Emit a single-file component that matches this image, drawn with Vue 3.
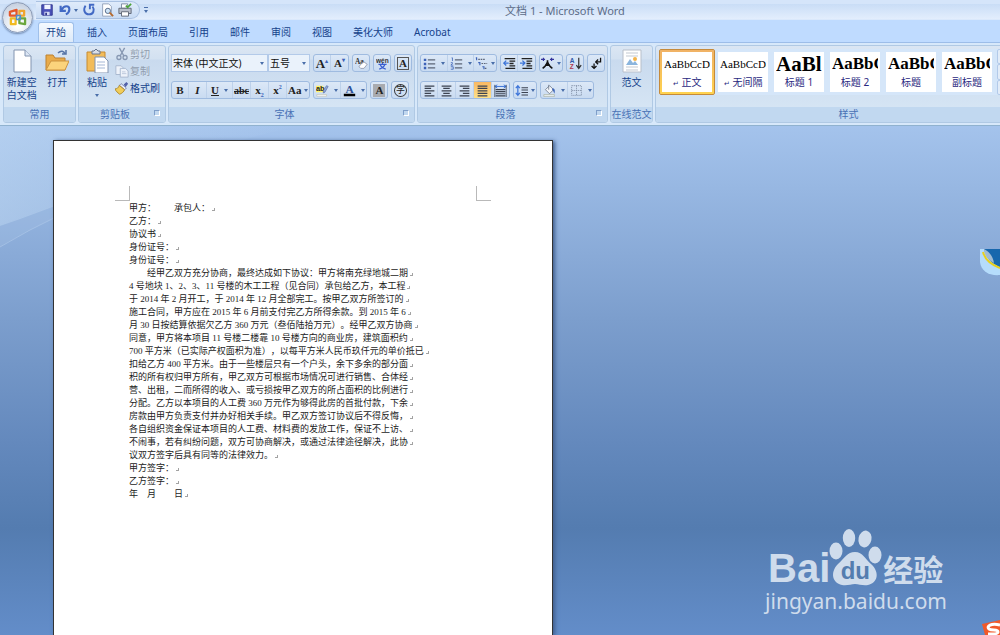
<script setup>
/**
 * App.vue
 * Word 2007 window: ribbon, page and desktop widgets
 */
import { ref } from 'vue'

const activeTab = ref('开始')
const activeStyle = ref(0)
const align = ref('justify')

const tabs = ['开始', '插入', '页面布局', '引用', '邮件', '审阅', '视图', '美化大师', 'Acrobat']

// 16x16 icons
const icons = {
  save: '<path d="M2 2h12v12H3l-1-1z" fill="#4a50b8" stroke="#30368e"/><path d="M5 2h7v5H5z" fill="#f1f4ff"/><path d="M5 10h6v4H5z" fill="#d4daf4"/><path d="M6 11h2v3H6z" fill="#30368e"/>',
  undo: '<path d="M3 3v6h6M4 8c3-6 9-5 9-1 0 3-2 5-4 6" fill="none" stroke="#4269c4" stroke-width="2.4"/>',
  redo: '<path d="M4 3c-3 5-1 10 4 10s7-5 4-9M14 2H9v5" fill="none" stroke="#4269c4" stroke-width="2.2"/>',
  preview: '<path d="M3 1h7l3 3v11H3z" fill="#fff" stroke="#8d9cb5"/><circle cx="9" cy="9" r="3" fill="#cfe5f8" stroke="#4d6181"/><path d="M11 11l4 4" stroke="#b5692c" stroke-width="2"/>',
  print: '<path d="M4 1h7v5H4z" fill="#fff" stroke="#75839a"/><path d="M1 6h14v6H1z" fill="#b9bfcb" stroke="#59616f"/><path d="M4 10h8v5H4z" fill="#fff" stroke="#59616f"/><path d="M9 3l2 2 4-4" fill="none" stroke="#4da43a" stroke-width="2"/>',
  cut: '<path d="M5 1l5 9M11 1L6 10" stroke="#8798b3" stroke-width="1.6"/><circle cx="4.500" cy="12" r="2.300" fill="none" stroke="#8798b3" stroke-width="1.500"/><circle cx="11.500" cy="12" r="2.300" fill="none" stroke="#8798b3" stroke-width="1.500"/>',
  copy: '<path d="M1 2h6l2 2v8H1z" fill="#edf2fa" stroke="#a3b3cc"/><path d="M6 5h6l3 3v7H6z" fill="#edf2fa" stroke="#a3b3cc"/><path d="M8 9h4M8 11h5" stroke="#b8c5d9"/>',
  brush: '<path d="M10 4l3-3 2 2-3 4z" fill="#5361a8"/><path d="M7 3l6 5-2 2-6-5z" fill="#e9eefc" stroke="#7883ad"/><path d="M5 5l6 5c-2 4-5 5-6 5-2-2-4-3-5-6 2 0 4-1 5-4z" fill="#f1cd5a" stroke="#a98427"/>',
  clear: '<text x="0" y="8" font-size="9" font-weight="bold" font-family="Liberation Serif" fill="#333">Aa</text><path d="M7 9l4-3 4 3-4 5H7l-2-2z" fill="#fff" stroke="#8b93a8"/>',
  phonetic: '<text x="0" y="7" font-size="8" font-weight="bold" font-family="Liberation Sans" fill="#333">wén</text><path d="M3 9h10M8 7v2M5 9c1 3 4 5 7 6M11 9c-1 3-4 5-7 6" fill="none" stroke="#3a5fd0" stroke-width="1.500"/>',
  highlight: '<path d="M0 2h9v8H0z" fill="#fff36b"/><text x="0" y="9" font-size="9" font-weight="bold" font-family="Liberation Sans" fill="#222">ab</text><path d="M13 2l2 1-4 7-2 1v-3z" fill="#8fa6d6" stroke="#4a639e" stroke-width=".7"/><path d="M1 13h12v2H1z" fill="#fff" stroke="#b2b29a" stroke-width=".6"/>',
  color: '<text x="3" y="11" font-size="14" font-weight="bold" font-family="Liberation Serif" fill="#2c4f96">A</text><path d="M1 12h14v3H1z" fill="#000"/>',
  bullets: '<path d="M1 2h3v3H1zM1 7h3v3H1zM1 12h3v3H1z" fill="#3c62b8"/><path d="M6 3.500h9M6 8.500h9M6 13.500h9" stroke="#5c6577" stroke-width="1.500"/>',
  numbers: '<path d="M2 1h1v4M1 7h2v1l-2 2h3M1 12h3v3H1" fill="none" stroke="#3c62b8"/><path d="M6 3.500h9M6 8.500h9M6 13.500h9" stroke="#5c6577" stroke-width="1.500"/>',
  levels: '<path d="M1 1h1v3M4 7h2v3M9 12h2v3" fill="none" stroke="#3c62b8" stroke-width="1.400"/><path d="M4 3h9M8 8h7M12 14h3" stroke="#5c6577" stroke-width="1.400" stroke-dasharray="2 1"/>',
  outdent: '<path d="M2 2h13M8 5h7M8 8h5M8 11h7M3 14h12" stroke="#222" stroke-width="1.600"/><path d="M7 7.500H1M4 4.500l-3 3 3 3" fill="none" stroke="#3c74d8" stroke-width="1.600"/>',
  indent: '<path d="M2 2h13M8 5h7M8 8h5M8 11h7M3 14h12" stroke="#222" stroke-width="1.600"/><path d="M0 7.500h6M3 4.500l3 3-3 3" fill="none" stroke="#3c74d8" stroke-width="1.600"/>',
  asian: '<path d="M8 4v2c-1 4-3 6-6 8M8 6c1 4 3 6 6 8M5 10h6" fill="none" stroke="#111" stroke-width="2"/><path d="M0 3h5M11 3h5M3 1v4M13 1v4" stroke="#34349c" stroke-width="1.500"/>',
  sort: '<text x="1" y="7" font-size="8" font-weight="bold" font-family="Liberation Sans" fill="#3157a8">A</text><text x="1" y="15" font-size="8" font-weight="bold" font-family="Liberation Sans" fill="#b0364e">Z</text><path d="M12 1v13M9 10l3 4 3-4" fill="none" stroke="#333" stroke-width="1.500"/>',
  marks: '<path d="M13 1v5H8M10 3L7 6l3 3" fill="none" stroke="#111" stroke-width="1.600"/><path d="M5 8v6M2 11l3 3 3-3" fill="none" stroke="#111" stroke-width="1.600"/>',
  left: '<path d="M2 2.500h12M2 5.500h8M2 8.500h12M2 11.500h8M2 14.500h12" stroke="#3b4250" stroke-width="1.500"/>',
  center: '<path d="M2 2.500h12M4 5.500h8M2 8.500h12M4 11.500h8M2 14.500h12" stroke="#3b4250" stroke-width="1.500"/>',
  right: '<path d="M2 2.500h12M6 5.500h8M2 8.500h12M6 11.500h8M2 14.500h12" stroke="#3b4250" stroke-width="1.500"/>',
  justify: '<path d="M2 2.500h12M2 5.500h12M2 8.500h12M2 11.500h12M2 14.500h12" stroke="#3b4250" stroke-width="1.500"/>',
  spread: '<path d="M1 3h14M4 1L1 3l3 2M12 1l3 2-3 2" fill="none" stroke="#3c74d8" stroke-width="1.200"/><path d="M2 7h12M2 9.500h12M2 12h12M2 14.500h12" stroke="#3b4250" stroke-width="1.500"/><path d="M1 1v15M15 1v15" stroke="#3b4250"/>',
  spacing: '<path d="M3.500 2v12M1 5l2.500-3L6 5M1 11l2.500 3L6 11" fill="none" stroke="#3c74d8" stroke-width="1.500"/><path d="M8 4.500h8M8 7.500h8M8 10.500h8M8 13.500h8" stroke="#3b4250" stroke-width="1.300"/>',
  fill: '<path d="M3 7l5-5 5 5-5 5z" fill="#f4f6fa" stroke="#6d7789"/><path d="M7 1v6" stroke="#6d7789"/><path d="M12 5c3 1 3 4 2 7-1-2-1-4-3-5z" fill="#4269b8"/><path d="M1 13h13v2.500H1z" fill="#e8eef0" stroke="#a2a995" stroke-width=".7"/>',
  border: '<path d="M2 2h12v12H2zM8 2v12M2 8h12" fill="none" stroke="#7d8ba3" stroke-dasharray="1.500 1"/>',
}

const quickBar = [
  { icon: 'save', name: '保存' },
  { icon: 'undo', name: '撤消', caret: true },
  { icon: 'redo', name: '恢复' },
  { icon: 'preview', name: '打印预览' },
  { icon: 'print', name: '快速打印' },
]

const fontTop = [
  [{ text: 'A', mark: '▴', cls: 'grow', name: '增大字体' }, { text: 'A', mark: '▾', cls: 'shrink', name: '缩小字体' }],
  [{ icon: 'clear', name: '清除格式' }],
  [{ icon: 'phonetic', name: '拼音指南' }],
  [{ text: 'A', cls: 'boxed', name: '字符边框' }],
]

const fontBottom = [
  [
    { text: 'B', cls: 'bold', name: '加粗' },
    { text: 'I', cls: 'italic', name: '倾斜' },
    { text: 'U', cls: 'underline', name: '下划线', caret: true, wide: true },
    { text: 'abc', cls: 'strike', name: '删除线' },
    { text: 'x', sub: '2', cls: 'bold', name: '下标' },
    { text: 'x', sup: '2', cls: 'bold', name: '上标' },
    { text: 'Aa', cls: 'case', name: '更改大小写', caret: true },
  ],
  [
    { icon: 'highlight', name: '突出显示', caret: true, wide: true },
    { icon: 'color', name: '字体颜色', caret: true, wide: true },
  ],
  [{ text: 'A', cls: 'shaded', name: '字符底纹' }],
  [{ text: '字', cls: 'circled', name: '带圈字符' }],
]

const paraTop = [
  [
    { icon: 'bullets', name: '项目符号', caret: true, wide: true },
    { icon: 'numbers', name: '编号', caret: true, wide: true },
    { icon: 'levels', name: '多级列表', caret: true },
  ],
  [{ icon: 'outdent', name: '减少缩进量' }, { icon: 'indent', name: '增加缩进量' }],
  [{ icon: 'asian', name: '中文版式', caret: true }],
  [{ icon: 'sort', name: '排序' }],
  [{ icon: 'marks', name: '显示编辑标记' }],
]

const paraBottom = [
  [
    { icon: 'left', name: '文本左对齐' },
    { icon: 'center', name: '居中' },
    { icon: 'right', name: '文本右对齐' },
    { icon: 'justify', name: '两端对齐' },
    { icon: 'spread', name: '分散对齐' },
  ],
  [{ icon: 'spacing', name: '行距', caret: true }],
  [
    { icon: 'fill', name: '底纹', caret: true, wide: true },
    { icon: 'border', name: '边框', caret: true, wide: true },
  ],
]

const fontRows = [fontTop, fontBottom]
const paraRows = [paraTop, paraBottom]

const styles = [
  { sample: 'AaBbCcDc', name: '正文', mark: true, size: 'small' },
  { sample: 'AaBbCcDc', name: '无间隔', mark: true, size: 'small' },
  { sample: 'AaBl', name: '标题 1', size: 'large' },
  { sample: 'AaBbC', name: '标题 2', size: 'medium' },
  { sample: 'AaBbC', name: '标题', size: 'medium' },
  { sample: 'AaBbC', name: '副标题', size: 'medium' },
]

const lines = [
  '甲方：　　承包人：',
  '乙方：',
  '协议书',
  '身份证号：',
  '身份证号：',
  '　　经甲乙双方充分协商，最终达成如下协议：甲方将南充绿地城二期',
  '4 号地块 1、2、3、11 号楼的木工工程（见合同）承包给乙方，本工程',
  '于 2014 年 2 月开工，于 2014 年 12 月全部完工。按甲乙双方所签订的',
  '施工合同，甲方应在 2015 年 6 月前支付完乙方所得余款。到 2015 年 6',
  '月 30 日按结算依据欠乙方 360 万元（叁佰陆拾万元）。经甲乙双方协商',
  '同意，甲方将本项目 11 号楼二楼靠 10 号楼方向的商业房，建筑面积约',
  '700 平方米（已实际产权面积为准），以每平方米人民币玖仟元的单价抵已',
  '扣给乙方 400 平方米。由于一些楼层只有一个户头，余下多余的部分面',
  '积的所有权归甲方所有，甲乙双方可根据市场情况可进行销售、合体经',
  '营、出租，二而所得的收入、或亏损按甲乙双方的所占面积的比例进行',
  '分配。乙方以本项目的人工费 360 万元作为够得此房的首批付款，下余',
  '房款由甲方负责支付并办好相关手续。甲乙双方签订协议后不得反悔，',
  '各自组织资金保证本项目的人工费、材料费的发放工作，保证不上访、',
  '不闹事，若有纠纷问题，双方可协商解决，或通过法律途径解决，此协',
  '议双方签字后具有同等的法律效力。',
  '甲方签字：',
  '乙方签字：',
  '年　月　　日',
]
</script>

<template>
  <div class="word">
    <!-- title bar -->
    <header class="title-bar">
      <div class="quick">
        <button v-for="q in quickBar" :key="q.icon" class="quick-btn" :aria-label="q.name">
          <svg class="ico" viewBox="0 0 16 16" v-html="icons[q.icon]"></svg>
          <i v-if="q.caret" class="caret"></i>
        </button>
      </div>
      <button class="more" aria-label="自定义快速访问工具栏"><i class="caret"></i></button>
      <h1 class="title">文档 1 - Microsoft Word</h1>
    </header>

    <button class="orb" aria-label="Office 按钮">
      <svg viewBox="0 0 20 20">
        <g fill="none" stroke-width="2.400" stroke-linejoin="round">
          <path d="M9 8H2V4l7-2z" stroke="#e4572a" />
          <path d="M12 3h5v5h-5z" stroke="#f0a52f" />
          <path d="M3 11h5v6H3z" stroke="#f1ba22" />
          <path d="M12 11h6v6l-6-1z" stroke="#6aa63c" />
          <path d="M9 8h4v4H9z" stroke="#4b8fd2" stroke-width="1.600" />
        </g>
      </svg>
    </button>

    <nav class="tabs">
      <button v-for="t in tabs" :key="t" class="tab" :class="{ active: t === activeTab }" @click="activeTab = t">{{ t }}</button>
    </nav>

    <!-- ribbon -->
    <div class="ribbon">
      <section class="group common">
        <div class="body">
          <button class="big">
            <svg viewBox="0 0 24 24">
              <path d="M4 1h11l6 6v16H4z" fill="#fff" stroke="#8294b0" />
              <path d="M15 1v6h6" fill="#dce6f4" stroke="#8294b0" />
            </svg>
            <span>新建空<br>白文档</span>
          </button>
          <button class="big">
            <svg viewBox="0 0 24 24">
              <path d="M1 21V6h7l2 3h10v12z" fill="#e8aa49" stroke="#bd8130" />
              <path d="M1 21l5-9h18l-4 9z" fill="#fbd37c" stroke="#cc9340" />
              <path d="M13 4c3-3 6-2 7 1M21 1v4h-4" fill="none" stroke="#5674a6" stroke-width="1.500" />
            </svg>
            <span>打开</span>
          </button>
        </div>
        <h2>常用</h2>
      </section>

      <section class="group clipboard">
        <div class="body">
          <button class="big">
            <svg viewBox="0 0 24 24">
              <path d="M2 3h18v19H2z" fill="#f2bc5a" stroke="#c68a31" />
              <path d="M7 5V2h2l2-2 2 2h2v3z" fill="#d9dfe9" stroke="#67758c" />
              <path d="M10 8h9l4 4v12H10z" fill="#fff" stroke="#8294b0" />
              <path d="M12 13h8M12 16h8M12 19h8" stroke="#a4b7d6" />
            </svg>
            <span>粘贴</span>
            <i class="caret"></i>
          </button>
          <div class="stack">
            <button class="line-btn off" disabled><svg class="ico" viewBox="0 0 16 16" v-html="icons.cut"></svg>剪切</button>
            <button class="line-btn off" disabled><svg class="ico" viewBox="0 0 16 16" v-html="icons.copy"></svg>复制</button>
            <button class="line-btn"><svg class="ico" viewBox="0 0 16 16" v-html="icons.brush"></svg>格式刷</button>
          </div>
        </div>
        <h2 class="with-launcher">剪贴板<i class="launcher"></i></h2>
      </section>

      <section class="group font">
        <div class="body rows">
          <div v-for="(row, r) in fontRows" :key="r" class="row">
            <div v-if="r === 0" class="combos">
              <label class="combo family">
                <select aria-label="字体"><option>宋体 (中文正文)</option></select>
                <i class="caret"></i>
              </label>
              <label class="combo size">
                <select aria-label="字号"><option>五号</option></select>
                <i class="caret"></i>
              </label>
            </div>
            <div v-for="(set, s) in row" :key="s" class="set">
              <button v-for="b in set" :key="b.name" class="tool" :class="{ wide: b.wide }" :aria-label="b.name">
                <svg v-if="b.icon" class="ico" viewBox="0 0 16 16" v-html="icons[b.icon]"></svg>
                <span v-else class="glyph" :class="b.cls">{{ b.text }}<sub v-if="b.sub">{{ b.sub }}</sub><sup v-if="b.sup">{{ b.sup }}</sup><sup v-if="b.mark">{{ b.mark }}</sup></span>
                <i v-if="b.caret" class="caret"></i>
              </button>
            </div>
          </div>
        </div>
        <h2 class="with-launcher">字体<i class="launcher"></i></h2>
      </section>

      <section class="group paragraph">
        <div class="body rows">
          <div v-for="(row, r) in paraRows" :key="r" class="row">
            <div v-for="(set, s) in row" :key="s" class="set">
              <button
                v-for="b in set" :key="b.name" class="tool" :class="{ active: b.icon === align, wide: b.wide }"
                :aria-label="b.name"
              >
                <svg class="ico" viewBox="0 0 16 16" v-html="icons[b.icon]"></svg>
                <i v-if="b.caret" class="caret"></i>
              </button>
            </div>
          </div>
        </div>
        <h2 class="with-launcher">段落<i class="launcher"></i></h2>
      </section>

      <section class="group online">
        <div class="body">
          <button class="big">
            <svg viewBox="0 0 24 24">
              <path d="M3 1h18v22H3z" fill="#fff" stroke="#b8bfca" />
              <path d="M6 4h12M6 7h12M6 18h12M6 21h12" stroke="#c3c9d1" />
              <path d="M6 16l4-6 3 4 2-2 3 4z" fill="#8bb5dd" />
              <circle cx="15" cy="10" r="2" fill="#f3b44b" />
            </svg>
            <span>范文</span>
          </button>
        </div>
        <h2>在线范文</h2>
      </section>

      <!-- runs on past the right edge of the window -->
      <section class="group styles">
        <div class="body">
          <div class="gallery">
            <button
              v-for="(s, i) in styles" :key="s.name" class="style" :class="{ active: i === activeStyle }"
              @click="activeStyle = i"
            >
              <span class="sample" :class="s.size">{{ s.sample }}</span>
              <span class="style-name"><small v-if="s.mark">↵</small>{{ s.name }}</span>
            </button>
            <div class="scroller"><i></i><i></i><i></i></div>
          </div>
        </div>
        <h2>样式</h2>
      </section>
    </div>

    <!-- page -->
    <main class="workspace">
      <svg class="swoosh" viewBox="0 0 300 140">
        <defs>
          <linearGradient id="fade">
            <stop offset="0" stop-color="#c3dbf4" stop-opacity=".5" />
            <stop offset="1" stop-color="#c3dbf4" stop-opacity="0" />
          </linearGradient>
        </defs>
        <path d="M0 0h300C200 20 120 58 0 100z" fill="url(#fade)" />
        <path d="M0 100L60 77v12Q30 103 0 121z" fill="#b4cdec" opacity=".2" />
        <path d="M0 121Q30 103 60 89" fill="none" stroke="#b8d0ee" opacity=".5" />
      </svg>
      <article class="sheet">
        <div class="corners"><i class="corner start"></i><i class="corner end"></i></div>
        <p v-for="(l, i) in lines" :key="i">{{ l }}<i class="break"></i></p>
      </article>
    </main>

    <!-- watermark -->
    <div class="watermark">
      <div class="brand">
        <span class="bai">Bai</span>
        <span class="paw">
          <svg viewBox="0 0 50 58">
            <g fill="#cfdcec">
              <ellipse cx="6" cy="23" rx="6.500" ry="8.500" />
              <ellipse cx="19" cy="10" rx="6.200" ry="9" />
              <ellipse cx="35" cy="11" rx="6.500" ry="8.500" transform="rotate(12 35 11)" />
              <ellipse cx="45" cy="27" rx="6.500" ry="8.500" />
              <path d="M25 24c8 0 10 7 16 12 9 8 7 19-3 21-5 1-9-1-13-1s-8 2-13 1C2 55 0 44 8 36c7-6 9-12 17-12z" />
            </g>
          </svg>
          <b>du</b>
        </span>
        <span class="jingyan">经验</span>
      </div>
      <div class="site">jingyan.baidu.com</div>
    </div>

    <!-- desktop widgets -->
    <svg class="widget bird" viewBox="0 0 20 27">
      <path d="M0 0h20v26C9 27 1 22 0 13z" fill="#b5dcfb" />
      <path d="M4 0h16v18C12 15 6 9 4 0z" fill="#1767ad" />
      <path d="M4 0c6 3 9 8 10 14C8 11 4 6 4 0z" fill="#9fbad3" />
      <path d="M3 3c2 8 9 13 17 16" fill="none" stroke="#e8cf1c" stroke-width="2" />
    </svg>
    <svg class="widget ime" viewBox="0 0 19 15">
      <path d="M1 4l18-4v15H4z" fill="#f1592a" />
      <path d="M19 5C10 3 5 6 8 9c3 2 9 0 9 3 0 2-5 2-10 2" fill="none" stroke="#fff" stroke-width="3" />
    </svg>
  </div>
</template>

<style>
body { margin: 0; }
</style>

<style scoped>
.word {
  position: relative;
  display: flex;
  flex-direction: column;
  min-height: 100vh;
  overflow: hidden;
  background: #bfdbff;
  color: #15428b;
  font-family: "Noto Sans", "Noto Sans CJK SC", sans-serif;
  font-size: 10px;
  line-height: 13px;
}

button {
  padding: 0;
  border: 0;
  background: none;
  color: inherit;
  font: inherit;
}

h1, h2, p { margin: 0; font-weight: normal; }

.ico { display: block; width: 14px; height: 14px; flex: none; }
.tool .ico { width: 13px; height: 13px; }

.caret {
  flex: none;
  width: 0;
  height: 0;
  border: 2px solid transparent;
  border-top: 3px solid #4a6ea9;
  border-bottom: 0;
}

/* title bar */
.title-bar {
  display: flex;
  align-items: center;
  height: 20px;
  padding-left: 36px;
  background: linear-gradient(#d5e5fa 0, #d5e5fa 4px, #c9ddf6 4px, #e3eefd 19px, #d3e4fa 20px);
}

.quick {
  display: flex;
  align-items: center;
  gap: 4px;
  height: 18px;
  padding: 0 7px 0 4px;
  border: 1px solid #a9c1e2;
  border-left: 0;
  border-radius: 0 10px 10px 0;
  background: linear-gradient(#dfebfb, #c8dbf4);
  box-sizing: border-box;
}

.quick-btn { display: flex; align-items: center; gap: 2px; }
.more { margin-left: 4px; padding-top: 2px; border-top: 1px solid #4a6ea9; }
.more .caret { display: block; }

.title {
  flex: 1;
  padding-right: 18px;
  color: #5c6c88;
  font-size: 11px;
  text-align: center;
}

.orb {
  position: absolute;
  top: 2px;
  left: 2px;
  width: 31px;
  height: 31px;
  border: 1px solid #8d9cb6;
  border-radius: 50%;
  background: radial-gradient(circle at 50% 75%, #fff 10%, #dfe6f0 50%, #b7c3d6);
  box-shadow: 0 1px 2px #6f88ae;
}

.orb svg { display: block; width: 19px; margin: auto; }

/* tabs */
.tabs {
  display: flex;
  align-items: flex-end;
  gap: 5px;
  height: 22px;
  padding-left: 38px;
}

.tab {
  height: 20px;
  padding: 0 7px;
  border: 1px solid transparent;
  border-bottom: 0;
  box-sizing: border-box;
  white-space: nowrap;
}

.tab.active {
  border-color: #a0c0ea;
  border-radius: 3px 3px 0 0;
  background: linear-gradient(#f4f9ff, #dce9f8);
}

/* ribbon */
.ribbon {
  display: flex;
  gap: 2px;
  height: 84px;
  padding: 2px 0 2px 3px;
  border-top: 1px solid #9dbde8;
  border-bottom: 1px solid #90b2cf;
  background: #d7e8fa;
  box-sizing: border-box;
}

.group {
  display: flex;
  flex: none;
  flex-direction: column;
  border: 1px solid #b0c9e4;
  border-radius: 3px;
  background: linear-gradient(#dbe6f3 0, #d3e1f1 13px, #c9daee 14px, #d9e8f6);
  box-sizing: border-box;
  overflow: hidden;
}

.common { width: 73px; }
.clipboard { width: 88px; }
.font { width: 247px; }
.paragraph { width: 191px; }
.online { width: 43px; }
.styles { flex: 1; min-width: 0; margin-right: -42px; }

.body { display: flex; flex: 1; }

.group h2 {
  position: relative;
  height: 15px;
  background: #c1d8f0;
  color: #4871b5;
  font-size: 10px;
  line-height: 15px;
  text-align: center;
  white-space: nowrap;
}

.group .with-launcher { padding-right: 14px; }

.launcher {
  position: absolute;
  top: 3px;
  right: 5px;
  width: 4px;
  height: 4px;
  border: 1px solid #7f9fca;
  border-right-color: #fff;
  border-bottom-color: #fff;
}

.big {
  display: flex;
  flex: 1;
  flex-direction: column;
  align-items: center;
  gap: 3px;
  padding-top: 3px;
}

.big svg { width: 24px; height: 24px; }
.big .caret { margin-top: 2px; }

.stack { display: flex; flex-direction: column; gap: 3px; padding: 1px 5px 0 0; }
.line-btn { display: flex; align-items: center; gap: 1px; white-space: nowrap; }
.off { color: #929eae; }

.rows { flex-direction: column; gap: 9px; padding: 8px 2px 0; }
.row { display: flex; gap: 3px; }
.combos { display: flex; }

.combo {
  display: flex;
  align-items: center;
  height: 18px;
  padding-right: 3px;
  border: 1px solid #b3cae9;
  background: #eaf2fb;
  box-sizing: border-box;
}

.combo select {
  flex: 1;
  min-width: 0;
  padding: 0 0 0 1px;
  border: 0;
  background: none;
  color: #111;
  font: inherit;
  appearance: none;
}

.family { width: 97px; }
.size { width: 42px; }

.set {
  display: flex;
  height: 18px;
  border: 1px solid #9fbbe0;
  border-radius: 3px;
  background: linear-gradient(#dce8f7, #c9dbf1);
  box-sizing: border-box;
}

.tool {
  display: flex;
  flex: none;
  align-items: center;
  justify-content: center;
  gap: 3px;
  min-width: 16px;
  padding: 0 1px;
  box-sizing: border-box;
}

.wide { gap: 5px; min-width: 26px; }
.tool + .tool { min-width: 18px; border-left: 1px solid #bdd1ea; }
.tool + .wide { min-width: 26px; }
.tool.active { background: linear-gradient(#f9b862, #fde08a); }

.glyph {
  color: #222;
  font-family: "Liberation Serif", "Noto Sans CJK SC", serif;
  font-size: 11px;
  font-weight: bold;
}

.glyph sub, .glyph sup { color: #3c62b8; font-size: 6px; line-height: 0; }
.grow { font-size: 13px; }
.italic { font-style: italic; }
.underline { text-decoration: underline; }
.strike { font-size: 10px; text-decoration: line-through; }
.boxed { padding: 0 1px; border: 1px solid #555; line-height: 11px; }
.shaded { padding: 0 2px; background: #a9abb0; }

.circled {
  padding: 0 1px;
  border: 1px solid #333;
  border-radius: 50%;
  font-size: 9px;
  font-weight: normal;
  line-height: 11px;
}

/* style gallery */
.gallery {
  display: flex;
  flex: 1;
  height: 46px;
  margin: 3px 3px 0;
  background: #d5e6f9;
}

.style {
  display: flex;
  flex: none;
  flex-direction: column;
  width: 56px;
  padding: 2px;
  border: 1px solid transparent;
  background: #fff content-box;
  box-sizing: border-box;
}

.style.active {
  border-color: #c58a3b;
  border-radius: 2px;
  background: linear-gradient(#fff, #fff) content-box, linear-gradient(#f0b266, #ffd34f) padding-box;
}

.sample {
  flex: none;
  height: 24px;
  margin: 0 2px;
  overflow: hidden;
  color: #000;
  font-family: "Liberation Serif", serif;
  line-height: 24px;
  text-align: left;
}

.small { font-size: 11px; }
.medium { font-size: 17px; font-weight: bold; }
.large { font-size: 21px; font-weight: bold; }
.style-name { color: #28287e; text-align: center; white-space: nowrap; }
.style-name small { margin-right: 3px; font-size: 7px; }

.scroller { display: flex; flex-direction: column; width: 16px; margin-left: 2px; }
.scroller i { flex: 1; border: 1px solid #b3cae9; border-radius: 2px; background: #e2ecf8; }

/* page */
.workspace {
  position: relative;
  display: flex;
  flex: 1;
  padding: 14px 0 0 53px;
  background: linear-gradient(#a4c3ec 0, #7c9ecd 38%, #6489bd 62%, #547cb0 79%, #638dc9);
}

.swoosh { position: absolute; top: 0; left: 0; width: 300px; height: 140px; }

.sheet {
  position: relative;
  width: 500px;
  padding: 45px 61px 60px 75px;
  border: 1px solid #333;
  border-bottom: 0;
  background: #fff;
  box-shadow: 2px 1px 4px #3f5d8c;
  box-sizing: border-box;
  color: #1b1b1b;
  font-family: "Liberation Serif", "Noto Sans CJK SC", serif;
  font-size: 9px;
  line-height: 13px;
  text-spacing-trim: space-all;
}

.sheet p { white-space: nowrap; }
.corners { display: flex; justify-content: space-between; height: 16px; margin-left: -14px; }
.corner { width: 14px; height: 14px; border: 0 solid #b9b9b9; border-bottom-width: 1px; }
.start { border-right-width: 1px; }
.end { border-left-width: 1px; }

.break {
  display: inline-block;
  width: 2px;
  height: 2px;
  margin-left: 2px;
  border: 0 solid #a3a3a3;
  border-width: 0 1px 1px 0;
}

/* watermark */
.watermark {
  position: absolute;
  right: 53px;
  bottom: 19px;
  color: #cfdcec;
}

.brand { display: flex; align-items: flex-end; height: 58px; padding: 0 2px 0 3px; }
.bai { font: bold 40px/36px "Liberation Sans", sans-serif; }
.paw { position: relative; width: 53px; height: 58px; }
.paw svg { display: block; width: 50px; height: 58px; overflow: visible; }

.paw b {
  position: absolute;
  inset: auto 3px 2px 0;
  color: #547daf;
  font: bold 24px/26px "Liberation Sans", sans-serif;
  text-align: center;
}

.jingyan { padding-bottom: 3px; font: bold 30px/30px "Noto Sans CJK SC", sans-serif; }
.site { font-size: 21px; line-height: 30px; }

.widget { position: absolute; right: 0; }
.bird { top: 249px; width: 20px; height: 27px; }
.ime { bottom: 0; width: 19px; height: 15px; }
</style>
